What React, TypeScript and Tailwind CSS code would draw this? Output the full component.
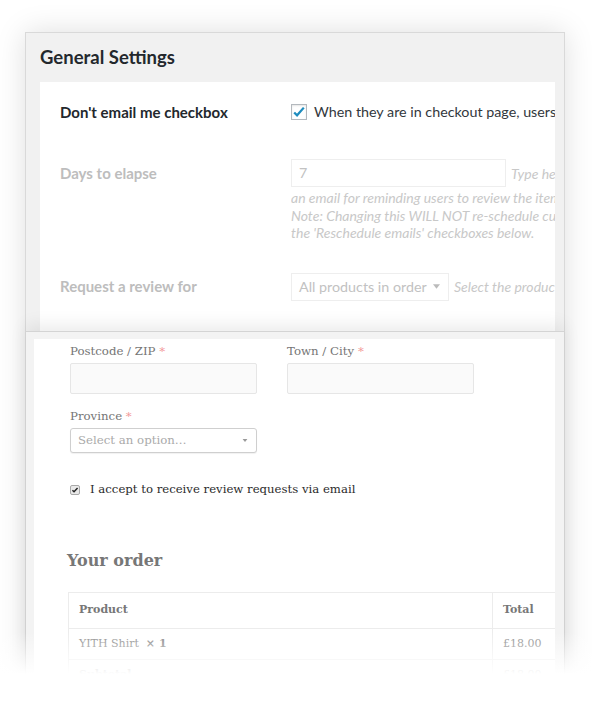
import React from "react";

const sans = "[font-family:Lato,'Open_Sans',sans-serif]";
const serif = "[font-family:'DejaVu_Serif',serif]";

function BlueCheck() {
  return (
    <span className="flex h-4 w-4 shrink-0 items-center justify-center border border-[#b4b9be] bg-white shadow-[inset_0_1px_2px_rgba(0,0,0,0.1)]">
      <svg viewBox="0 0 16 16" className="h-[14px] w-[14px]">
        <path d="M2.5 8.5l3.3 3.3L13.5 3" fill="none" stroke="#1e8cbe" strokeWidth="2.6" />
      </svg>
    </span>
  );
}

function SmallCheck() {
  return (
    <span className="flex h-[10px] w-[10px] shrink-0 items-center justify-center rounded-[2px] border border-[#a9a9a9] bg-[#e9e9e9]">
      <svg viewBox="0 0 10 10" className="h-[8px] w-[8px]">
        <path d="M1.8 5.2l2 2L8.2 2.4" fill="none" stroke="#222" strokeWidth="1.8" />
      </svg>
    </span>
  );
}

function Caret({ className }: { className: string }) {
  return (
    <svg viewBox="0 0 8 5" className={className}>
      <path d="M0 0h8L4 5z" fill="currentColor" />
    </svg>
  );
}

function Label({ text }: { text: string }) {
  return (
    <div className={`${serif} text-[11.75px] leading-[18px] text-[#757575]`}>
      {text} <span className="text-[#f39a9a]">*</span>
    </div>
  );
}

export default function App() {
  return (
    <div className="relative h-[725px] w-[603px] overflow-hidden bg-white px-[25px] pt-[32px]">
      <div className="h-[720px] w-[540px] border border-[#d9d9d9] bg-[#f1f1f1] shadow-[0_0_28px_rgba(0,0,0,0.13)]">
        {/* plugin settings */}
        <section className={`flex h-[298px] flex-col ${sans}`}>
          <h2 className="flex h-[49px] items-center pl-[14px] text-[18.5px] font-bold text-[#23282d]">
            General Settings
          </h2>
          <div className="ml-[14px] mr-[9px] flex-1 overflow-hidden bg-white pl-[20px] pt-[20px]">
            <div className="flex h-[20px] items-center">
              <div className="w-[231px] shrink-0 text-[15px] font-bold text-[#23282d]">
                Don't email me checkbox
              </div>
              <div className="flex items-center gap-[7px]">
                <BlueCheck />
                <span className="whitespace-nowrap text-[14.3px] text-[#32373c]">
                  When they are in checkout page, users
                </span>
              </div>
            </div>

            <div className="mt-[37px] flex">
              <div className="flex h-[28px] w-[231px] shrink-0 items-center text-[15px] font-bold text-[#bdbdbd]">
                Days to elapse
              </div>
              <div className="min-w-0 flex-1 overflow-hidden">
                <div className="flex items-center gap-[5px]">
                  <div className="flex h-[28px] w-[215px] shrink-0 items-center border border-[#eee] px-[7px] text-[14.3px] text-[#c2c2c2]">
                    7
                  </div>
                  <span className="whitespace-nowrap text-[14px] italic text-[#c8c8c8]">Type he</span>
                </div>
                <div className="mt-[2px] whitespace-nowrap text-[14px] italic leading-[17.5px] text-[#c8c8c8]">
                  <div>an email for reminding users to review the item</div>
                  <div>Note: Changing this WILL NOT re-schedule curr</div>
                  <div>the 'Reschedule emails' checkboxes below.</div>
                </div>
              </div>
            </div>

            <div className="mt-[31px] flex items-center">
              <div className="w-[231px] shrink-0 text-[15px] font-bold text-[#bdbdbd]">
                Request a review for
              </div>
              <div className="flex h-[28px] w-[158px] shrink-0 items-center justify-between border border-[#eee] pl-[7px] pr-[8px] text-[14.3px] text-[#c2c2c2]">
                <span className="whitespace-nowrap">All products in order</span>
                <Caret className="h-[5px] w-[7px] text-[#bbb]" />
              </div>
              <span className="ml-[5px] whitespace-nowrap text-[14px] italic text-[#c8c8c8]">
                Select the produc
              </span>
            </div>
          </div>
        </section>

        {/* checkout page */}
        <section className="relative border-t border-[#d4d4d4] bg-[#f3f3f3] pl-[8px] pr-[9px] pt-[7px] shadow-[0_-6px_16px_rgba(0,0,0,0.08)]">
          <div className="h-[400px] overflow-hidden bg-white pl-[33px] pt-[3px]">
            <div className="pl-[3px]">
              <div className="flex gap-[30px]">
                <div className="w-[187px]">
                  <Label text="Postcode / ZIP" />
                  <div className="mt-[3px] h-[31px] rounded-[2px] border border-[#e6e6e6] bg-[#fafafa]" />
                </div>
                <div className="w-[187px]">
                  <Label text="Town / City" />
                  <div className="mt-[3px] h-[31px] rounded-[2px] border border-[#e6e6e6] bg-[#fafafa]" />
                </div>
              </div>

              <div className="mt-[13px] w-[187px]">
                <Label text="Province" />
                <div className="mt-[3px] flex h-[25px] items-center justify-between rounded-[3px] border border-[#cfcfcf] bg-white pl-[7px] pr-[8px] shadow-[0_1px_1px_rgba(0,0,0,0.06)]">
                  <span className={`${serif} text-[11.75px] text-[#aaa]`}>Select an option…</span>
                  <Caret className="h-[3px] w-[6px] text-[#999]" />
                </div>
              </div>

              <div className="mt-[28px] flex h-[18px] items-center gap-[10px]">
                <SmallCheck />
                <span className={`${serif} text-[11.7px] text-[#2b2b2b]`}>
                  I accept to receive review requests via email
                </span>
              </div>
            </div>

            <h3 className={`${serif} mt-[49px] text-[16px] font-bold leading-[26px] text-[#777]`}>
              Your order
            </h3>

            <table className={`${serif} ml-[1px] mt-[18px] w-[560px] border-collapse text-[11px] text-[#8a8a8a]`}>
              <thead>
                <tr className="h-[36px]">
                  <th className="w-[424px] border border-[#ececec] pl-[10px] text-left font-bold text-[#777]">Product</th>
                  <th className="border border-[#ececec] pl-[10px] text-left font-bold text-[#777]">Total</th>
                </tr>
              </thead>
              <tbody>
                <tr className="h-[31px]">
                  <td className="border border-[#ececec] pl-[10px]">
                    YITH Shirt&nbsp; <strong className="font-bold text-[#888]">× 1</strong>
                  </td>
                  <td className="border border-[#ececec] pl-[10px]">£18.00</td>
                </tr>
                <tr className="h-[31px]">
                  <td className="border border-[#ececec] pl-[10px] font-bold">Subtotal</td>
                  <td className="border border-[#ececec] pl-[10px]">£18.00</td>
                </tr>
              </tbody>
            </table>
          </div>
        </section>
      </div>

      {/* fade out at the bottom */}
      <div className="absolute inset-x-0 bottom-0 top-[632px] bg-[linear-gradient(to_bottom,rgba(255,255,255,0)_0px,#fff_42px)]" />
    </div>
  );
}
